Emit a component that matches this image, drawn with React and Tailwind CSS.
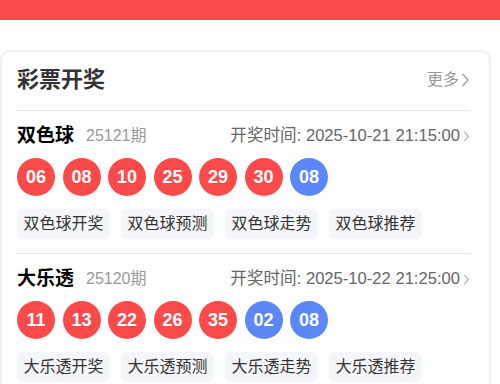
import React from 'react';

const FONT = { fontFamily: '"Liberation Sans", "Noto Sans CJK SC", sans-serif' };

const draws = [
  {
    name: '双色球',
    issue: '25121期',
    time: '2025-10-21 21:15:00',
    red: ['06', '08', '10', '25', '29', '30'],
    blue: ['08'],
  },
  {
    name: '大乐透',
    issue: '25120期',
    time: '2025-10-22 21:25:00',
    red: ['11', '13', '22', '26', '35'],
    blue: ['02', '08'],
  },
];

function Chevron({ className }) {
  return (
    <svg viewBox="0 0 8 14" className={className} fill="none" stroke="currentColor" strokeWidth="1.8" strokeLinecap="round" strokeLinejoin="round">
      <path d="M1.5 1.5 L6.5 7 L1.5 12.5" />
    </svg>
  );
}

function Ball({ num, blue }) {
  return (
    <div className={`w-[38px] h-[38px] rounded-full flex items-center justify-center text-white font-bold text-[18px] ${blue ? 'bg-[#5b88f6]' : 'bg-[#fb4a4a]'}`}>
      {num}
    </div>
  );
}

function DrawRow({ draw }) {
  const tags = ['开奖', '预测', '走势', '推荐'];
  return (
    <div className="pt-[13px] pb-[14px] border-b border-[#e6e6e6]">
      <div className="flex items-center h-[24px]">
        <span className="text-[19px] font-bold text-black">{draw.name}</span>
        <span className="ml-[12px] text-[16px] text-[#999]">{draw.issue}</span>
        <span className="ml-auto text-[16.6px] text-[#666]">开奖时间: {draw.time}</span>
        <Chevron className="ml-[3px] w-[7px] h-[11px] text-[#bbb]" />
      </div>
      <div className="flex gap-[7.5px] mt-[10px]">
        {draw.red.map((n, i) => <Ball key={'r' + i} num={n} />)}
        {draw.blue.map((n, i) => <Ball key={'b' + i} num={n} blue />)}
      </div>
      <div className="flex gap-[11px] mt-[13px]">
        {tags.map((t) => (
          <span key={t} className="h-[30px] px-[6.5px] flex items-center rounded-[6px] bg-[#f5f6fa] text-[16px] text-[#333]">
            {draw.name}{t}
          </span>
        ))}
      </div>
    </div>
  );
}

export default function App() {
  return (
    <div className="w-[500px] h-[384px] bg-white overflow-hidden" style={FONT}>
      <div className="h-[20px] bg-[#fb4a4a]" />
      <div className="mt-[30px] w-[491px] border-2 border-[#efefef] rounded-[10px] pl-[15px] pr-[19px]">
        <div className="flex items-center pt-[16px] pb-[18px] border-b border-[#e6e6e6]">
          <h2 className="text-[22px] leading-[24px] font-bold text-[#333]">彩票开奖</h2>
          <span className="ml-auto text-[16px] text-[#999]">更多</span>
          <Chevron className="ml-[2px] w-[9px] h-[14px] text-[#aaa]" />
        </div>
        {draws.map((d) => <DrawRow key={d.name} draw={d} />)}
      </div>
    </div>
  );
}
